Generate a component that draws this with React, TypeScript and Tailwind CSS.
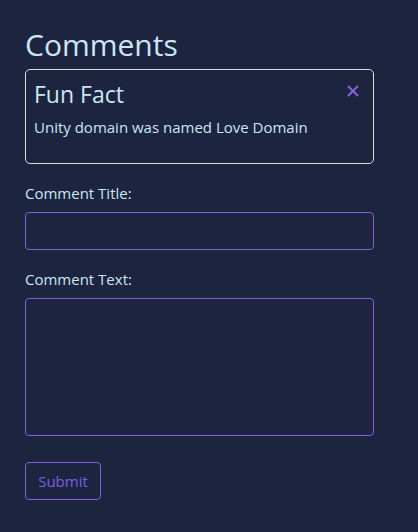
import React from "react";

export default function App() {
  return (
    <div
      className="min-h-[532px] w-full bg-[#1c2440] text-[#cde6f3] pl-[25px] pt-[26px]"
      style={{ fontFamily: '"Open Sans", "Noto Sans", sans-serif' }}
    >
      <div className="w-[349px]">
        <h1 className="text-[30px] leading-[38px] m-0">Comments</h1>
        <div className="mt-[5px] h-[95px] border border-[#e6dccb] rounded-[5px] px-[8px] pt-[9px] relative">
          <div className="text-[23px] leading-[30px]">Fun Fact</div>
          <div className="text-[15px] leading-[20px] mt-[8px]">Unity domain was named Love Domain</div>
          <button className="absolute right-[14px] top-[15px] text-[#8a63e0]">
            <svg width="12" height="12" viewBox="0 0 12 12" fill="none" stroke="#8a63e0" strokeWidth="1.8">
              <path d="M1 1L11 11M11 1L1 11" />
            </svg>
          </button>
        </div>
        <label className="block mt-[19px] text-[15px] leading-[20px]">Comment Title:</label>
        <input className="block mt-[9px] w-full h-[38px] bg-transparent border border-[#8a5ad6] rounded-[4px] outline-none" />
        <label className="block mt-[19px] text-[15px] leading-[20px]">Comment Text:</label>
        <textarea className="block mt-[9px] w-full h-[138px] bg-transparent border border-[#8a5ad6] rounded-[4px] outline-none resize-none" />
        <button className="block mt-[26px] w-[76px] h-[38px] border border-[#8a5ad6] rounded-[4px] text-[#7d5fe0] text-[15px]">
          Submit
        </button>
      </div>
    </div>
  );
}
